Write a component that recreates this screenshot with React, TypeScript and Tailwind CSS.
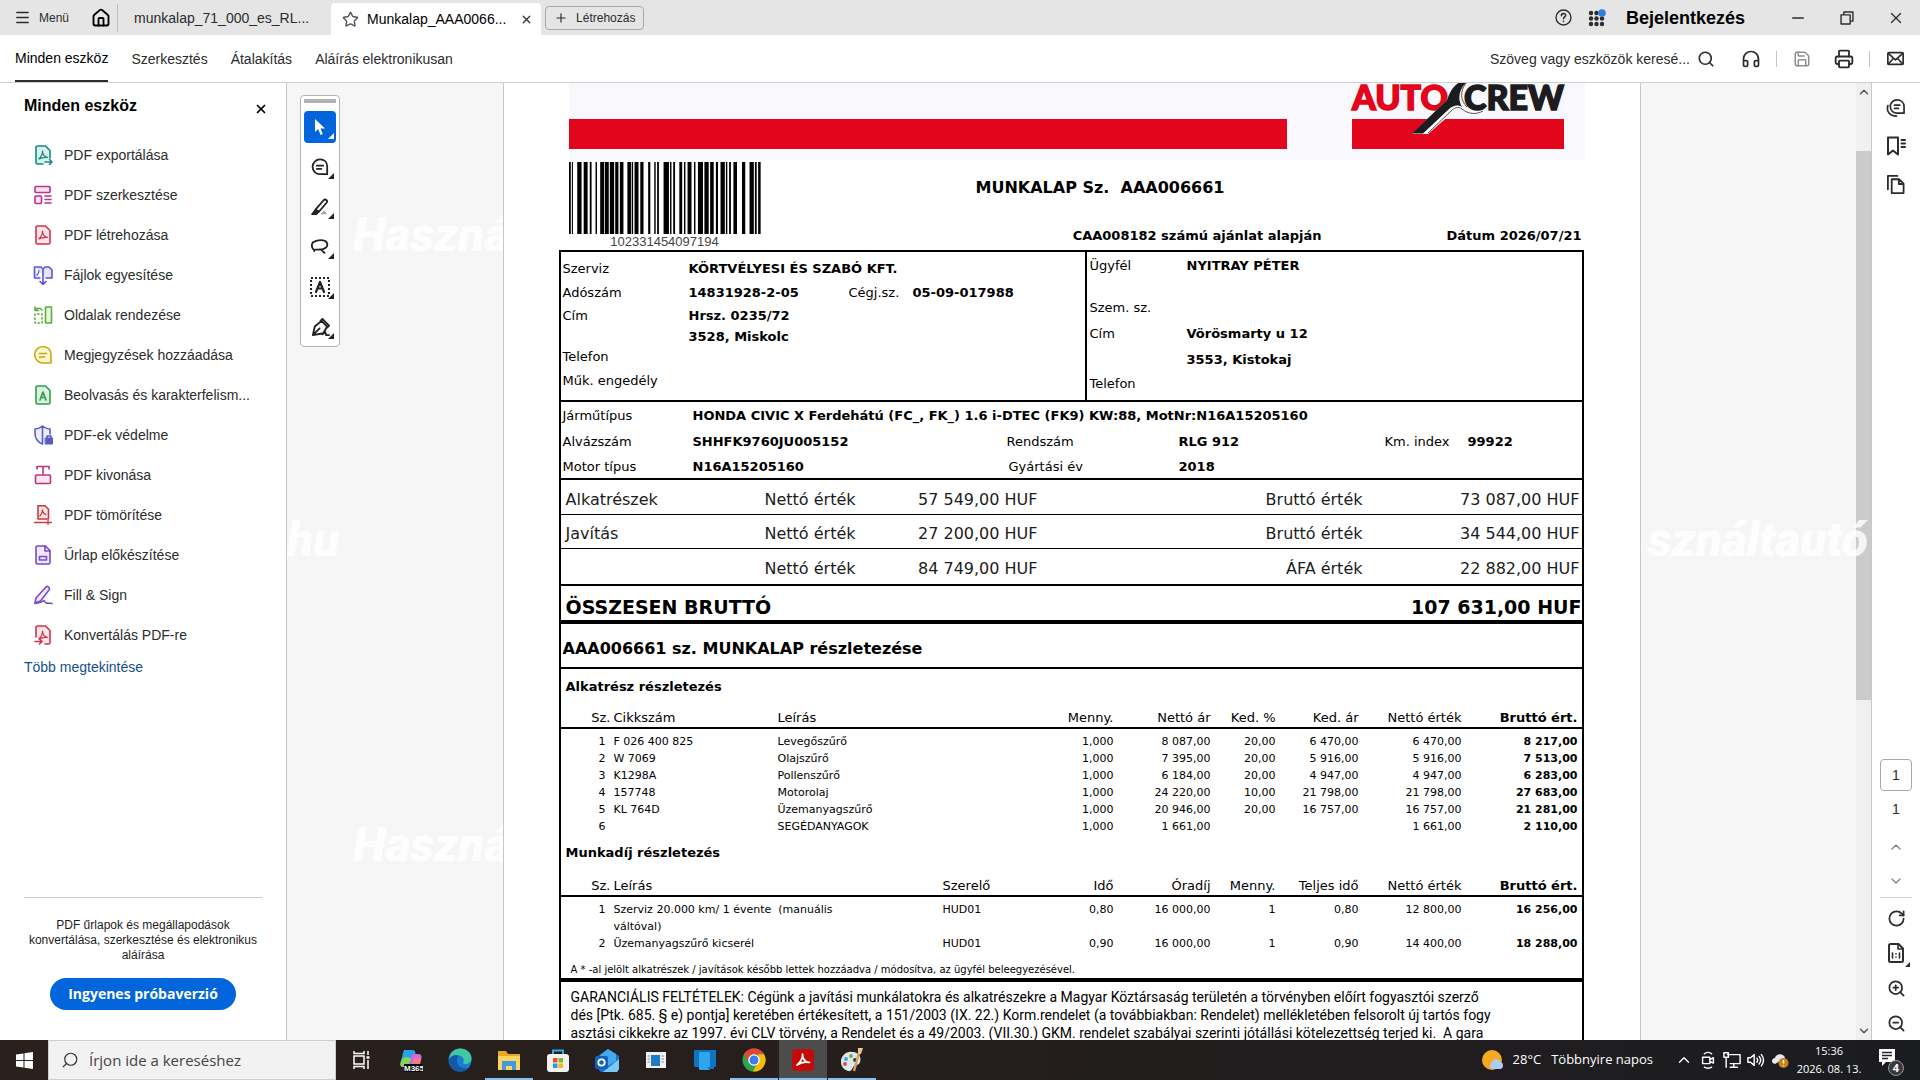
import type { ReactNode } from 'react';
import {
  ChevronDown,
  ChevronUp,
  Headphones,
  House,
  Menu,
  Minus,
  Plus,
  Printer,
  RotateCw,
  Save,
  Search,
  Star,
  X,
  ZoomIn,
  ZoomOut,
} from 'lucide-react';

const ACROBAT = 'M6 14c2-2 3.500-5 3.500-8 0 3 2 5.500 5 6.500-3-.5-6 0-8.500 1.500z';

function Svg({ children, size = 20, color = 'currentColor' }: { children: ReactNode; size?: number; color?: string }) {
  return (
    <svg width={size} height={size} viewBox="0 0 20 20" fill="none" stroke={color} strokeWidth="1.6" strokeLinejoin="round" strokeLinecap="round" aria-hidden="true" className="shrink-0">
      {children}
    </svg>
  );
}

const PAGE = 'M4.500 1h8L17 5.500V17.500a1.500 1.500 0 0 1-1.500 1.500h-11A1.500 1.500 0 0 1 3 17.500V2.500A1.500 1.500 0 0 1 4.500 1z';

const TOOLS = [
  {
    label: 'PDF exportálása',
    icon: (
      <Svg color="#138a80">
        <path d="M10 19H4.500A1.500 1.500 0 0 1 3 17.500v-15A1.500 1.500 0 0 1 4.500 1h8L17 5.500V13" fill="#d8efed" />
        <path d="M12 17h7M16.500 14.500 19 17l-2.500 2.500" />
        <path d={ACROBAT} strokeWidth="1.200" />
      </Svg>
    ),
  },
  {
    label: 'PDF szerkesztése',
    icon: (
      <Svg color="#b8328e">
        <rect x="2" y="1.500" width="15" height="6" rx="1" fill="#fbe3f3" />
        <rect x="2" y="11" width="6.500" height="7.500" rx="1" fill="#fbe3f3" />
        <path d="M12 11h6M12 14.500h6M12 18h6" />
      </Svg>
    ),
  },
  {
    label: 'PDF létrehozása',
    icon: (
      <Svg color="#d0344a">
        <path d={PAGE} fill="#fde6e8" />
        <path d={ACROBAT} strokeWidth="1.200" />
      </Svg>
    ),
  },
  {
    label: 'Fájlok egyesítése',
    icon: (
      <Svg color="#5b55d6">
        <path d="M2 2h6l2 2 2-2h4l3 3v8h-6M7 13H1.500V2M10 4v15M7 16.500l3 3 3-3" fill="#e6e5fb" />
        <path d="M4 10c1.500-1.500 2-3 2-4.500" strokeWidth="1.200" />
      </Svg>
    ),
  },
  {
    label: 'Oldalak rendezése',
    icon: (
      <Svg color="#5fae3e">
        <rect x="12.500" y="2" width="6" height="16" fill="#e5f5de" />
        <path d="M9 5C7 2.500 4 3 2.500 5M2 2v3.500h3.500" />
        <path d="M2 9v9h7V9z" strokeDasharray="1.500 2.500" />
      </Svg>
    ),
  },
  {
    label: 'Megjegyzések hozzáadása',
    icon: (
      <Svg color="#c9a90c">
        <path d="M10 1.500c5 0 8 3.500 8 8V18h-8a8.200 8.200 0 1 1 0-16.500z" fill="#fbf6d0" />
        <path d="M6.500 8.500h7M6.500 12h5" />
      </Svg>
    ),
  },
  {
    label: 'Beolvasás és karakterfelism...',
    icon: (
      <Svg color="#2f9e4c">
        <path d={PAGE} fill="#daf1df" />
        <path d="M7 15l3-8 3 8M8 12.500h4" />
      </Svg>
    ),
  },
  {
    label: 'PDF-ek védelme',
    icon: (
      <Svg color="#5b5bc4">
        <path d="M9.500 19C4 17 2 13 2 8V4c3 0 5-1 7.500-3 2.500 2 4.500 3 7.500 3v5M9.500 1v18" fill="#eeeefb" />
        <rect x="12.500" y="13" width="7" height="6" fill="#5b5bc4" strokeWidth="1" />
        <path d="M14 13v-2h4v2" />
      </Svg>
    ),
  },
  {
    label: 'PDF kivonása',
    icon: (
      <Svg color="#bb3480">
        <path d="M4 4V1.500h12V4M10 2v7" />
        <rect x="2.500" y="10" width="15" height="8.500" rx="1" fill="#fbe6f1" />
      </Svg>
    ),
  },
  {
    label: 'PDF tömörítése',
    icon: (
      <Svg color="#c8393f">
        <path d="M5 .8h7l3.500 3.500V14h-10.500z" fill="#fde6e8" />
        <path d="M7 11c2-2 2.500-4 2.500-6 0 2 1 3.500 3.500 4.500M1.500 17.500h17M15 15.500v4" strokeWidth="1.300" />
      </Svg>
    ),
  },
  {
    label: 'Űrlap előkészítése',
    icon: (
      <Svg color="#7a49cc">
        <path d={PAGE} fill="#eee6fb" />
        <path d="M12 1v5h5M6.500 11.500h7V15h-7z" />
      </Svg>
    ),
  },
  {
    label: 'Fill & Sign',
    icon: (
      <Svg color="#7a49cc">
        <path d="M2 18l1-5L13 2c1.500-1.500 4.500.5 3 3L7.500 16z" fill="#f1eafc" />
        <path d="M2 18.500c4-1 7-1 9-3 1 2 1.500 3 3 2.500l5 .5" />
      </Svg>
    ),
  },
  {
    label: 'Konvertálás PDF-re',
    icon: (
      <Svg color="#d0344a">
        <path d="M3 12V2.500A1.500 1.500 0 0 1 4.500 1h8L17 5.500V17.500a1.500 1.500 0 0 1-1.500 1.500H12" fill="#fde6e8" />
        <path d="M2 16.500h7M6.500 14 9 16.500 6.500 19" />
        <path d={ACROBAT} strokeWidth="1.200" />
      </Svg>
    ),
  },
];

const PARTS = [
  ['1', 'F 026 400 825', 'Levegőszűrő', '1,000', '8 087,00', '20,00', '6 470,00', '6 470,00', '8 217,00'],
  ['2', 'W 7069', 'Olajszűrő', '1,000', '7 395,00', '20,00', '5 916,00', '5 916,00', '7 513,00'],
  ['3', 'K1298A', 'Pollenszűrő', '1,000', '6 184,00', '20,00', '4 947,00', '4 947,00', '6 283,00'],
  ['4', '157748', 'Motorolaj', '1,000', '24 220,00', '10,00', '21 798,00', '21 798,00', '27 683,00'],
  ['5', 'KL 764D', 'Üzemanyagszűrő', '1,000', '20 946,00', '20,00', '16 757,00', '16 757,00', '21 281,00'],
  ['6', '', 'SEGÉDANYAGOK', '1,000', '1 661,00', '', '', '1 661,00', '2 110,00'],
];

const LABOUR = [
  ['1', 'Szerviz 20.000 km/ 1 évente \u00a0(manuális váltóval)', 'HUD01', '0,80', '16 000,00', '1', '0,80', '12 800,00', '16 256,00'],
  ['2', 'Üzemanyagszűrő kicserél', 'HUD01', '0,90', '16 000,00', '1', '0,90', '14 400,00', '18 288,00'],
];

// [start, width] of every bar, on a 536 wide strip
const BARS = [
  [0, 5], [8, 3], [23, 12], [41, 11], [58, 5], [74, 4], [87, 11], [100, 11], [114, 12], [129, 9], [142, 10], [163, 10],
  [175, 4], [183, 11], [199, 9], [221, 6], [238, 4], [246, 5], [264, 15], [282, 4], [291, 5], [308, 8], [321, 4],
  [331, 11], [349, 4], [360, 14], [378, 12], [394, 10], [410, 6], [423, 12], [438, 4], [447, 5], [459, 10], [483, 9],
  [504, 12], [519, 5], [528, 7],
];

function TitleBar() {
  return (
    <header className="flex h-[35px] shrink-0 items-center bg-[#e5e5e5] text-[#2c2c2c]">
      <button className="ml-[14px] flex items-center gap-2 text-xs">
        <Menu size={17} strokeWidth={2} />
        Menü
      </button>
      <button aria-label="Kezdőlap" className="ml-[22px] flex h-7 items-center gap-1.5 border-r border-[#bdbdbd] pr-1.5 text-black">
        <House size={20} strokeWidth={2.200} />
      </button>
      <button className="w-[213px] truncate pl-4 text-left text-sm">munkalap_71_000_es_RL...</button>
      <div className="mt-[3px] flex h-8 w-[210px] items-center rounded-t bg-white pl-[11px] pr-2 text-sm text-black">
        <Star size={17} strokeWidth={2} className="mr-2 shrink-0 text-[#555]" />
        <button className="flex-1 text-left">Munkalap_AAA0066...</button>
        <button aria-label="Lap bezárása" className="text-[#333]">
          <X size={13} strokeWidth={2.500} />
        </button>
      </div>
      <button className="ml-1 flex h-6 w-[99px] items-center gap-2 rounded border border-[#a8a8a8] pl-2 text-xs">
        <Plus size={14} strokeWidth={2} />
        Létrehozás
      </button>
      <div className="ml-auto flex items-center">
        <button aria-label="Súgó">
          <Svg size={17}>
            <circle cx="10" cy="10" r="8.800" />
            <path d="M7.500 8c0-3.500 5-3.500 5-.5 0 1.800-2.500 1.800-2.500 4M10 14.300v.4" strokeWidth="1.800" />
          </Svg>
        </button>
        <button aria-label="Alkalmazások" className="ml-4">
          <svg width="18" height="18" viewBox="0 0 18 18" fill="#2c2c2c">
            {[4, 9.500, 15].map((y) => [3, 8.500, 14].map((x) => <circle key={`${x}-${y}`} cx={x} cy={y} r="2.200" />))}
            <circle cx="14" cy="4" r="3.800" fill="#2f7fe0" />
          </svg>
        </button>
        <button className="ml-5 mr-7 text-lg font-bold text-black">Bejelentkezés</button>
        <button aria-label="Kis méret" className="flex w-[49px] justify-center">
          <Minus size={18} strokeWidth={2} />
        </button>
        <button aria-label="Előző méret" className="flex w-[49px] justify-center">
          <Svg size={14}>
            <path d="M1.500 5.500h13v13h-13zM5.500 5.500v-4h13v13h-4" strokeWidth="2" />
          </Svg>
        </button>
        <button aria-label="Bezárás" className="flex w-[49px] justify-center">
          <X size={18} strokeWidth={1.800} />
        </button>
      </div>
    </header>
  );
}

function MenuBar() {
  return (
    <nav className="flex h-12 shrink-0 items-center border-b border-[#d0d0d0] bg-white text-sm text-[#2c2c2c]">
      <div className="flex h-full gap-[23px] pl-[15px]">
        <button className="border-b-2 border-[#2c2c2c] text-black">Minden eszköz</button>
        <button>Szerkesztés</button>
        <button>Átalakítás</button>
        <button>Aláírás elektronikusan</button>
      </div>
      <div className="ml-auto flex items-center pr-[13px]">
        <input aria-label="Keresés" placeholder="Szöveg vagy eszközök keresé..." className="w-[204px] outline-none placeholder:text-[#2c2c2c]" />
        <button aria-label="Keresés indítása" className="flex w-6 justify-center">
          <Search size={18} strokeWidth={2.200} />
        </button>
        <button aria-label="Támogatás" className="ml-[21px] flex w-6 justify-center">
          <Headphones size={20} strokeWidth={2} />
        </button>
        <span className="mx-[13px] h-4 w-px bg-[#c4c4c4]" />
        <button aria-label="Mentés" className="flex w-6 justify-center text-[#8f8f8f]">
          <Save size={18} strokeWidth={2} />
        </button>
        <button aria-label="Nyomtatás" className="ml-[18px] flex w-6 justify-center">
          <Printer size={20} strokeWidth={2.200} />
        </button>
        <span className="mx-[13px] h-4 w-px bg-[#c4c4c4]" />
        <button aria-label="Küldés e-mailben" className="flex w-6 justify-center">
          <Svg size={17}>
            <rect x="1" y="3" width="18" height="14" rx="1.500" strokeWidth="2" />
            <path d="M1.500 4l8.500 7.500L18.500 4M1.500 16.500 7.500 10M18.500 16.500l-6-6.500" strokeWidth="2" />
          </Svg>
        </button>
      </div>
    </nav>
  );
}

function Sidebar() {
  return (
    <aside className="flex w-[287px] shrink-0 flex-col border-r border-[#c8c8c8] bg-white">
      <div className="flex h-[52px] items-center justify-between pl-6 pr-[18px]">
        <h2 className="pb-1.5 text-base font-bold text-black">Minden eszköz</h2>
        <button aria-label="Panel bezárása">
          <X size={14} strokeWidth={3} />
        </button>
      </div>
      <ul>
        {TOOLS.map((t) => (
          <li key={t.label}>
            <button className="flex h-10 w-full items-center gap-[11px] pl-[33px] text-sm text-[#2c2c2c]">
              {t.icon}
              {t.label}
            </button>
          </li>
        ))}
      </ul>
      <a href="#tools" className="ml-6 mt-0.5 self-start text-sm text-[#14508c]">
        Több megtekintése
      </a>
      <div className="mx-6 mb-[30px] mt-auto border-t border-[#c8c8c8] pt-5 text-center">
        <p className="text-xs leading-[15px] text-[#1c1c1c]">
          PDF űrlapok és megállapodások konvertálása, szerkesztése és elektronikus aláírása
        </p>
        <button className="mt-[15px] h-8 w-[186px] rounded-full bg-[#0265dc] font-['Open_Sans'] text-sm font-bold text-white">
          Ingyenes próbaverzió
        </button>
      </div>
    </aside>
  );
}

function QuickTool({ label, active, children }: { label: string; active?: boolean; children: ReactNode }) {
  return (
    <button
      aria-label={label}
      className={`relative flex h-8 w-8 items-center justify-center rounded-sm ${active ? 'bg-[#0265dc] text-white' : 'text-[#222]'}`}
    >
      {children}
      <svg width="6" height="6" viewBox="0 0 6 6" fill="currentColor" className="absolute bottom-1 right-0.5">
        <path d="M6 0v6H0z" />
      </svg>
    </button>
  );
}

function QuickTools() {
  return (
    <div className="absolute left-[13px] top-3 flex w-10 flex-col items-center gap-2 rounded border border-[#b4b4b4] bg-white pb-[3px] pt-[3px]">
      <span className="h-1 w-8 bg-[#b1b1b1]" />
      <QuickTool label="Kijelölés" active>
        <svg width="12" height="17" viewBox="0 0 12 17" fill="white">
          <path d="M1 0v13l3.200-3 2.300 6 2.300-1-2.300-5.500H11z" />
        </svg>
      </QuickTool>
      <QuickTool label="Megjegyzés">
        <Svg size={18}>
          <path d="M10 1.500c5 0 8 3.500 8 8V18h-8a8.200 8.200 0 1 1 0-16.500zM6.500 8.500h7M6.500 12h5" strokeWidth="2" />
        </Svg>
      </QuickTool>
      <QuickTool label="Kiemelés">
        <Svg size={18}>
          <path d="M10 18h8l-3-4z" fill="#aaa" stroke="none" />
          <path d="M5 13 14 2.500c2-2 5 .5 3.500 2.500L9 15z" strokeWidth="2" />
          <path d="M4.500 13.500 1 18h5l3-3z" fill="currentColor" />
        </Svg>
      </QuickTool>
      <QuickTool label="Rajzolás">
        <Svg size={18}>
          <path d="M2 5c4-3 13-4 15.500 0 2.500 5-3 8-7.500 8-4 0-7-1-6.500 1.500M2 5c-2 3-1 6 1.500 8.500M10 12.500c2 .5 3 2 5 4" strokeWidth="2" />
        </Svg>
      </QuickTool>
      <QuickTool label="Szöveg">
        <Svg size={20}>
          <path d="M1 1h18v18H1z" strokeWidth="2" strokeDasharray="2 2" strokeLinecap="butt" />
          <path d="M6 15l4-10 4 10M7.500 11.500h5" strokeWidth="2.200" />
        </Svg>
      </QuickTool>
      <QuickTool label="Aláírás">
        <Svg size={19}>
          <path d="M2 18 4 9l7-6 6 6-4 7zM2 18l7-7M10 3l2-2 7 7-2 2M12 17l3-2 1 3h3" strokeWidth="2" />
        </Svg>
      </QuickTool>
    </div>
  );
}

function Logo() {
  return (
    <svg width="216" height="68" viewBox="0 0 216 68" role="img" aria-label="Auto Crew" className="shrink-0">
      <rect x="2" y="36" width="212" height="30" fill="#e3051b" />
      <text x="2" y="27" fontFamily="Lato, sans-serif" fontWeight="900" fontSize="34" fill="#e3051b" stroke="#e3051b" strokeWidth="1.500">AUTO</text>
      <path d="M62 51 97 17C99 9 104 1 113-2h18c12 8 13 24 3 31-8 5-17 3-22-1-5-3-8 0-11 3L78 51z" fill="#f8f8fd" />
      <path d="M78 50 101 28c3-3 7-5 11-2 6 5 14 6 21 2M116 0c-6 8-6 17 1 24" fill="none" stroke="#55555a" strokeWidth="1" />
      <path d="M62 50.500 97 17C100 9 103 2 112-2h6c-9 7-11 18-6 26-5-3-9-1-13 2L73 50.500z" fill="#1c1c1e" />
      <text x="114" y="27" fontFamily="Lato, sans-serif" fontWeight="900" fontSize="34" fill="#1c1c1e" stroke="#1c1c1e" strokeWidth="1.500">CREW</text>
    </svg>
  );
}

function SheetHead() {
  return (
    <>
      <div className="ml-[10px] flex h-[77px] justify-between bg-[#f8f8fd] pr-[19px]">
        <div className="mt-9 h-[30px] w-[718px] bg-[#e3051b]" />
        <Logo />
      </div>
      <div className="ml-[10px] flex h-[90px]">
        <div className="w-[192px] pt-0.5 text-center">
          <svg width="192" height="72" viewBox="0 0 536 72" preserveAspectRatio="none" role="img" aria-label="Vonalkód">
            {BARS.map(([x, w]) => (
              <rect key={x} x={x} width={w} height="72" />
            ))}
          </svg>
          <p className="font-['Liberation_Sans'] text-[13px] leading-4 text-[#444]">102331454097194</p>
        </div>
        <div className="flex-1 pt-4 font-bold">
          <h1 className="pl-[215px] text-base leading-6">MUNKALAP Sz. &nbsp;AAA006661</h1>
          <div className="mt-6 flex justify-end gap-[125px] pr-[3px] leading-6">
            <span>CAA008182 számú ajánlat alapján</span>
            <span>Dátum 2026/07/21</span>
          </div>
        </div>
      </div>
    </>
  );
}

function Parties() {
  return (
    <section className="flex h-[150px] border-b-2 border-black">
      <dl className="grid flex-1 grid-cols-[126px_160px_64px_1fr] grid-rows-[24px_24px_21px_22px_18px_30px] items-center pl-0.5 pt-[5px]">
        <dt>Szerviz</dt>
        <dd className="col-span-3 font-bold">KÖRTVÉLYESI ÉS SZABÓ KFT.</dd>
        <dt>Adószám</dt>
        <dd className="font-bold">14831928-2-05</dd>
        <dt>Cégj.sz.</dt>
        <dd className="font-bold">05-09-017988</dd>
        <dt>Cím</dt>
        <dd className="col-span-3 font-bold">Hrsz. 0235/72</dd>
        <dd className="col-span-3 col-start-2 font-bold">3528, Miskolc</dd>
        <dt className="col-span-4">Telefon</dt>
        <dt className="col-span-4">Műk. engedély</dt>
      </dl>
      <dl className="grid w-[497px] grid-cols-[97px_1fr] grid-rows-[26px_16px_26px_26px_25px_24px] items-center border-l-2 border-black pl-[3px] pt-px">
        <dt>Ügyfél</dt>
        <dd className="font-bold">NYITRAY PÉTER</dd>
        <dt className="row-start-3">Szem. sz.</dt>
        <dt className="row-start-4">Cím</dt>
        <dd className="row-start-4 font-bold">Vörösmarty u 12</dd>
        <dd className="col-start-2 row-start-5 font-bold">3553, Kistokaj</dd>
        <dt className="row-start-6">Telefon</dt>
      </dl>
    </section>
  );
}

function Vehicle() {
  return (
    <section className="border-b-2 border-black">
      <dl className="grid h-[76px] grid-cols-[130px_314px_172px_206px_83px_1fr] grid-rows-[26px_26px_24px] items-center pl-0.5 pt-px">
        <dt>Járműtípus</dt>
        <dd className="col-span-5 font-bold">HONDA CIVIC X Ferdehátú (FC_, FK_) 1.6 i-DTEC (FK9) KW:88, MotNr:N16A15205160</dd>
        <dt>Alvázszám</dt>
        <dd className="font-bold">SHHFK9760JU005152</dd>
        <dt>Rendszám</dt>
        <dd className="font-bold">RLG 912</dd>
        <dt>Km. index</dt>
        <dd className="font-bold">99922</dd>
        <dt>Motor típus</dt>
        <dd className="font-bold">N16A15205160</dd>
        <dt className="pl-0.5">Gyártási év</dt>
        <dd className="font-bold">2018</dd>
      </dl>
    </section>
  );
}

function Totals() {
  const rows = [
    ['Alkatrészek', '57 549,00 HUF', 'Bruttó érték', '73 087,00 HUF'],
    ['Javítás', '27 200,00 HUF', 'Bruttó érték', '34 544,00 HUF'],
    ['', '84 749,00 HUF', 'ÁFA érték', '22 882,00 HUF'],
  ];
  return (
    <table className="w-full table-fixed border-b-2 border-black text-base text-[#1c1c1c]">
      <colgroup>
        <col className="w-[204px]" />
        <col className="w-[120px]" />
        <col className="w-[153px]" />
        <col className="w-[325px]" />
        <col />
      </colgroup>
      <tbody>
        {rows.map(([name, net, label, gross]) => (
          <tr key={net} className="h-[34px] border-b border-black last:h-[37px] last:border-0">
            <th className="pl-[5px] pt-1.5 text-left font-normal">{name}</th>
            <td className="pt-1.5">Nettó érték</td>
            <td className="pt-1.5 text-right">{net}</td>
            <td className="pt-1.5 text-right">{label}</td>
            <td className="pr-0.5 pt-1.5 text-right">{gross}</td>
          </tr>
        ))}
      </tbody>
    </table>
  );
}

function DetailTable({ head, rows, wide }: { head: string[]; rows: string[][]; wide?: boolean }) {
  const last = head.length - 1;
  const align = (i: number) => {
    if (i === 0) return 'text-right';
    if (i <= 2) return 'text-left';
    return i === last ? 'pr-1 text-right font-bold' : 'text-right font-normal';
  };
  return (
    <table className="w-full table-fixed">
      <colgroup>
        <col className="w-[53px]" />
        <col className={wide ? 'w-[329px]' : 'w-[164px]'} />
        <col />
        <col className="w-[97px]" />
        <col className="w-[97px]" />
        <col className="w-[65px]" />
        <col className="w-[83px]" />
        <col className="w-[103px]" />
        <col className="w-[120px]" />
      </colgroup>
      <thead>
        <tr className="h-6 border-b-2 border-black">
          {head.map((h, i) => (
            <th key={h} className={`whitespace-nowrap pt-1 ${align(i)} ${i === 0 ? 'pr-[3px]' : ''} ${i < 3 ? 'font-normal' : ''}`}>
              {h}
            </th>
          ))}
        </tr>
      </thead>
      <tbody className="text-[11px] leading-[17px] before:block before:h-1">
        {rows.map((r) => (
          <tr key={r[0]} className="align-top">
            {r.map((c, i) => (
              <td key={i} className={`${align(i)} ${i === 0 ? 'pr-2' : ''}`}>
                {i === 1 ? <div className="max-w-[240px]">{c}</div> : c}
              </td>
            ))}
          </tr>
        ))}
      </tbody>
    </table>
  );
}

function Sheet() {
  return (
    <article className="relative mx-auto w-full max-w-[1138px] overflow-hidden border-x border-[#c8c8c8] bg-white px-[55px] font-['DejaVu_Sans'] text-[13px] leading-4 text-black">
      <SheetHead />
      <div className="mr-px border-x-2 border-t-2 border-black">
        <Parties />
        <Vehicle />
        <Totals />
        <div className="flex h-[38px] items-center justify-between border-b-4 border-black pl-[5px] pt-2 text-[19px] font-bold">
          <span>ÖSSZESEN BRUTTÓ</span>
          <span>107 631,00 HUF</span>
        </div>
        <h2 className="flex h-[45px] items-center border-b-2 border-black pl-0.5 pt-1.5 text-base font-bold">
          AAA006661 sz. MUNKALAP részletezése
        </h2>
        <h3 className="pb-[9px] pl-[5px] pt-2.5 font-bold">Alkatrész részletezés</h3>
        <DetailTable
          head={['Sz.', 'Cikkszám', 'Leírás', 'Menny.', 'Nettó ár', 'Ked. %', 'Ked. ár', 'Nettó érték', 'Bruttó ért.']}
          rows={PARTS}
        />
        <h3 className="pb-[11px] pl-[5px] pt-2.5 font-bold">Munkadíj részletezés</h3>
        <DetailTable
          wide
          head={['Sz.', 'Leírás', 'Szerelő', 'Idő', 'Óradíj', 'Menny.', 'Teljes idő', 'Nettó érték', 'Bruttó ért.']}
          rows={LABOUR}
        />
        <p className="border-b-4 border-black pl-[10px] pt-2.5 text-[10px] leading-4">
          A * -al jelölt alkatrészek / javítások később lettek hozzáadva / módosítva, az ügyfél beleegyezésével.
        </p>
        <p className="whitespace-nowrap pl-[10px] pt-1.5 font-['Roboto'] text-[14px] leading-[18px]">
          GARANCIÁLIS FELTÉTELEK: Cégünk a javítási munkálatokra és alkatrészekre a Magyar Köztársaság területén a törvényben előírt fogyasztói szerző
          <br />
          dés [Ptk. 685. § e) pontja] keretében értékesített, a 151/2003 (IX. 22.) Korm.rendelet (a továbbiakban: Rendelet) mellékletében felsorolt új tartós fogy
          <br />
          asztási cikkekre az 1997. évi CLV törvény, a Rendelet és a 49/2003. (VII.30.) GKM. rendelet szabályai szerinti jótállási kötelezettség terjed ki. &nbsp;A gara
        </p>
      </div>
    </article>
  );
}

const MARK = "pointer-events-none absolute select-none whitespace-nowrap font-['Roboto'] text-[48px] leading-none font-black italic text-white/80";

function Viewer() {
  return (
    <main className="relative flex min-w-0 flex-1 overflow-hidden bg-[#f6f6f6]">
      <div className="relative min-w-0 flex-1 overflow-hidden">
        <span aria-hidden="true" className={`${MARK} left-[66px] top-[128px]`}>Haszná</span>
        <span aria-hidden="true" className={`${MARK} left-[66px] top-[738px]`}>Haszná</span>
        <span aria-hidden="true" className={`${MARK} left-0 top-[433px]`}>hu</span>
        <Sheet />
        <QuickTools />
      </div>
      <div className="flex w-[15px] shrink-0 flex-col items-center bg-[#f0f0f0] py-0.5">
        <ChevronUp size={14} strokeWidth={2.500} className="text-[#555]" />
        <div className="mt-[52px] h-[549px] w-full bg-[#cbcbcb]" />
        <ChevronDown size={14} strokeWidth={2.500} className="mt-auto text-[#555]" />
      </div>
      <span aria-hidden="true" className={`${MARK} right-[3px] top-[433px]`}>sználtautó</span>
    </main>
  );
}

function Rail() {
  return (
    <aside className="flex w-[49px] shrink-0 flex-col items-center border-l border-[#c8c8c8] bg-white text-[#2c2c2c]">
      <div className="flex flex-col gap-[19px] pt-[15px]">
        <button aria-label="Megjegyzések">
          <Svg size={19}>
            <path d="M11.500 2c4.500 0 7.500 3 7.500 7v7h-7.500a7 7 0 1 1 0-14zM9 7.500h5.500M9 11h4M2 8c-2 6 2 11 9 11" strokeWidth="1.800" />
          </Svg>
        </button>
        <button aria-label="Könyvjelzők">
          <Svg>
            <path d="M2 1.500h10V18.500l-5-4-5 4zM15.500 4H19M15.500 7.500H19M15.500 11H19" strokeWidth="2" />
          </Svg>
        </button>
        <button aria-label="Oldalak">
          <Svg size={19}>
            <path d="M6 4.500h8l4.500 4.500v10H6zM13.500 5v4.500h4.500M2 15V1h10" strokeWidth="1.900" />
          </Svg>
        </button>
      </div>
      <div className="mt-auto flex flex-col items-center pb-[7px] text-sm">
        <input aria-label="Oldalszám" defaultValue="1" className="h-8 w-8 rounded border border-[#a8a8a8] text-center" />
        <span className="mt-2 leading-5">1</span>
        <button aria-label="Előző oldal" className="mt-5 text-[#8a8a8a]">
          <ChevronUp size={16} strokeWidth={2.200} />
        </button>
        <button aria-label="Következő oldal" className="mt-[18px] text-[#8a8a8a]">
          <ChevronDown size={16} strokeWidth={2.200} />
        </button>
        <div className="mt-2 h-px w-8 bg-[#d4d4d4]" />
        <button aria-label="Forgatás" className="mt-[11px]">
          <RotateCw size={19} strokeWidth={2.200} />
        </button>
        <button aria-label="Tényleges méret" className="relative mt-[15px]">
          <Svg>
            <path d={PAGE} strokeWidth="2" />
            <path d="M12 1v5h5M6.500 10v5M13.500 10v5M10 10.800v.2M10 14v.2" strokeWidth="1.600" />
          </Svg>
          <svg width="5" height="5" viewBox="0 0 6 6" fill="currentColor" className="absolute -bottom-1 -right-1">
            <path d="M6 0v6H0z" />
          </svg>
        </button>
        <button aria-label="Nagyítás" className="mt-4">
          <ZoomIn size={19} strokeWidth={2.200} />
        </button>
        <button aria-label="Kicsinyítés" className="mt-4">
          <ZoomOut size={19} strokeWidth={2.200} />
        </button>
      </div>
    </aside>
  );
}

const APPS = [
  {
    name: 'Feladatnézet',
    state: '',
    art: (
      <g fill="none" stroke="#fff" strokeWidth="1.500">
        <path d="M4 8h10v8H4zM4 3v2.500h10V3M4 21v-2.500h10V21M18 3v4M18 12v9" />
        <path d="M16.500 9.500h3" strokeWidth="2.500" />
      </g>
    ),
  },
  {
    name: 'Microsoft 365',
    state: '',
    art: (
      <>
        <path d="M5 2h8c3 0 4 2 3 5l-3 9c-1 3-3 3-5 3H4c-3 0-3-3-2-6l2-8z" fill="#2aa3e8" />
        <path d="M4 10c3-1 6-1 8 1l-3 8H4c-3 0-3-3-2-6z" fill="#8fd14f" />
        <path d="M13 6h6c4 0 4 3 3 6l-1 4c-1 3-3 4-5 4h-5z" fill="#d864e0" />
        <path d="M15 10h7l-1 6c-1 3-3 4-5 4h-4z" fill="#f27a8a" />
        <rect x="5" y="16" width="18" height="8" fill="#000" />
        <text x="5" y="23" fontFamily="Liberation Sans" fontSize="8" fontWeight="700" fill="#fff">M365</text>
      </>
    ),
  },
  {
    name: 'Edge',
    state: '',
    art: (
      <>
        <circle cx="12" cy="12" r="11.500" fill="#1a7fd4" />
        <path d="M1 11C2 4 7 .5 12 .5 19 .5 23.500 5 23.500 10c0 4-3 6-6 6-2 0-3-1-2-2.500C17 10 13 7 9 7c-4 0-7 2-8 4z" fill="#3fc8a4" />
        <path d="M9 12c0 6 4 9 11 8-5 6-17 4-19-6 0-6 6-8 10-6-1 1-2 2-2 4z" fill="#1259a8" />
      </>
    ),
  },
  {
    name: 'Fájlkezelő',
    state: 'open',
    art: (
      <>
        <path d="M1 3h8l2 3h12v16H1z" fill="#e8a826" />
        <path d="M1 8h22v14H1z" fill="#fcd462" />
        <path d="M5 13h14v9h-4v-4H9v4H5z" fill="#3f9ae0" />
      </>
    ),
  },
  {
    name: 'Store',
    state: '',
    art: (
      <>
        <path d="M7 7V2.500h10V7" fill="none" stroke="#39a9e8" strokeWidth="2" />
        <rect x="1" y="6" width="22" height="18" rx="3" fill="#f2f2f2" />
        <path d="M7 10h4.500v4.500H7z" fill="#e8532b" />
        <path d="M12.500 10H17v4.500h-4.500z" fill="#7db928" />
        <path d="M7 15.500h4.500V20H7z" fill="#2a9fe0" />
        <path d="M12.500 15.500H17V20h-4.500z" fill="#f5b813" />
      </>
    ),
  },
  {
    name: 'Outlook',
    state: '',
    art: (
      <>
        <path d="M3 8 13 1l11 7v13l-2 3H6l-3-3z" fill="#1673cf" />
        <path d="M5 7 13 1l8 5v7l-8 5z" fill="#46a8ee" />
        <path d="M8 24 24 11v10l-2 3z" fill="#7cc8f5" />
        <rect x="0" y="8" width="13" height="13" rx="2" fill="#0f62b8" />
        <circle cx="6.500" cy="14.500" r="3.200" fill="none" stroke="#fff" strokeWidth="1.800" />
      </>
    ),
  },
  {
    name: 'Hírek',
    state: '',
    art: (
      <>
        <rect x="2" y="4" width="20" height="16" fill="#f2f2f2" />
        <rect x="7" y="7" width="9" height="11" fill="#1f7ac8" />
        <path d="M3.500 8H6M3.500 11H6M3.500 14H6M17.500 8H20M17.500 11H20M17.500 14H20" stroke="#888" strokeWidth="1" />
      </>
    ),
  },
  {
    name: 'Telefon',
    state: '',
    art: (
      <>
        <rect x="1" y="2" width="22" height="17" rx="1" fill="#0e75c2" />
        <rect x="6" y="4" width="11" height="18" rx="1" fill="#2ea5ee" />
        <path d="M15 20h6" stroke="#0e75c2" strokeWidth="2" />
      </>
    ),
  },
  {
    name: 'Chrome',
    state: 'open',
    art: (
      <>
        <circle cx="12" cy="12" r="11.500" fill="#2da44e" />
        <path d="M2 6.300A11.500 11.500 0 0 1 22 6.300H12z" fill="#ea4335" />
        <path d="M2 6.300 7.500 15 12 6.300z" fill="#ea4335" />
        <path d="M22 6.300A11.500 11.500 0 0 1 11 23.500L17 12l-1-5.700z" fill="#fbbc05" />
        <circle cx="12" cy="12" r="5.800" fill="#fff" />
        <circle cx="12" cy="12" r="4.500" fill="#3b7ded" />
      </>
    ),
  },
  {
    name: 'Acrobat',
    state: 'active',
    art: (
      <>
        <rect x="1" y="1" width="22" height="22" rx="4" fill="#c30b0b" />
        <path d="M6 17c3-2 6-7 5.500-11 0 5 3 8 7 8.500-4-1-9 0-12.500 2.500z" fill="none" stroke="#fff" strokeWidth="1.700" strokeLinejoin="round" />
      </>
    ),
  },
  {
    name: 'Paint',
    state: 'open',
    art: (
      <>
        <path d="M9 4c8-1 13 4 11 10-1 4-4 2-6 4s-2 6-6 5C-2 20-1 6 9 4z" fill="#dfe6ea" />
        <circle cx="6" cy="11" r="1.900" fill="#36a3d9" />
        <circle cx="11" cy="8" r="1.900" fill="#5bb548" />
        <circle cx="5" cy="16" r="1.900" fill="#e0463c" />
        <circle cx="15" cy="12" r="1.900" fill="#333" />
        <path d="M20 1 14 23" stroke="#d8a15c" strokeWidth="2.500" />
        <path d="M18 0h5l-2 6h-3z" fill="#e9c48d" />
      </>
    ),
  },
];

function Taskbar() {
  return (
    <footer className="flex h-10 shrink-0 items-center bg-linear-to-r from-[#2b211c] via-[#241e1d] to-[#1b1c20] font-['Open_Sans'] text-white">
      <button aria-label="Start" className="flex w-12 shrink-0 justify-center">
        <svg width="17" height="17" viewBox="0 0 17 17" fill="white">
          <path d="M0 2.500 7.500 1.400V8H0zM8.500 1.300 17 0v8H8.500zM0 9h7.500v6.600L0 14.500zM8.500 9H17v8l-8.500-1.300z" />
        </svg>
      </button>
      <label className="flex h-full w-72 shrink-0 items-center gap-2.5 border border-[#cfcfcf] bg-[#f2f2f2] pl-3 text-[#333]">
        <Search size={18} strokeWidth={1.600} className="-scale-x-100" />
        <input aria-label="Keresés a gépen" placeholder="Írjon ide a kereséshez" className="w-56 bg-transparent text-[15px] outline-none placeholder:text-[#444]" />
      </label>
      <div className="ml-0.5 flex h-full gap-px">
        {APPS.map((a) => (
          <button
            key={a.name}
            aria-label={a.name}
            className={`flex w-12 items-center justify-center border-b-2 pt-0.5 ${
              a.state === 'active' ? 'border-[#8ebfe8] bg-[#4d4b4b]' : a.state === 'open' ? 'border-[#8ebfe8]' : 'border-transparent'
            }`}
          >
            <svg width="24" height="24" viewBox="0 0 24 24">
              {a.art}
            </svg>
          </button>
        ))}
      </div>
      <div className="ml-auto flex items-center text-[13px]">
        <button className="flex items-center">
          <svg width="24" height="24" viewBox="0 0 24 24" className="mr-2">
            <circle cx="11" cy="12" r="10" fill="#f6a823" />
            <path d="M11 21a4 4 0 0 1 0-7c1-4 7-4 8 0 4 0 4 7 0 7z" fill="#a9cdf5" />
          </svg>
          28°C
          <span className="ml-2.5">Többnyire napos</span>
        </button>
        <button aria-label="Rejtett ikonok" className="ml-[22px]">
          <ChevronUp size={18} strokeWidth={1.800} />
        </button>
        <button aria-label="Értekezlet" className="ml-1.5">
          <Svg size={18}>
            <path d="M4 7h8v7H4zM12 9.500l4-2v6l-4-2M6 3c2-2 6-2 8 0M6 18c2 1.500 6 1.500 8 0" />
          </Svg>
        </button>
        <button aria-label="Hálózat" className="ml-1.5">
          <Svg size={18}>
            <path d="M5 4h14v10H8M12 14v4M8 18h8M1 2h5v5H1zM3.500 7v11" />
          </Svg>
        </button>
        <button aria-label="Hangerő" className="ml-1.5">
          <Svg size={18}>
            <path d="M1 7.500h3L8 4v12l-4-3.500H1zM11 8c1 1.500 1 3 0 4.500M13.500 6c2 2.500 2 6 0 8.500M16 4c3 4 3 8.500 0 12.500" />
          </Svg>
        </button>
        <button aria-label="OneDrive" className="ml-1.5">
          <svg width="18" height="18" viewBox="0 0 18 18">
            <path d="M4 13C-1 12 1 7 4 7c1-5 9-5 10 0z" fill="#e8e8e8" />
            <circle cx="12.500" cy="12" r="5" fill="#c98222" />
            <path d="M12.500 9v3.500M12.500 14v.8" stroke="#fff" strokeWidth="1.500" />
          </svg>
        </button>
        <time className="w-[80px] text-center text-[11px] leading-[18px]">
          15:36
          <br />
          2026. 08. 13.
        </time>
        <button aria-label="Értesítések" className="relative ml-[9px] mr-[18px] h-6 w-6">
          <svg width="24" height="24" viewBox="0 0 24 24">
            <path d="M1 1h16v13H8l-4 4v-4H1z" fill="#fff" />
            <path d="M4 4.500h10M4 7.500h10M4 10.500h6" stroke="#222" strokeWidth="1.300" />
          </svg>
          <span className="absolute -bottom-1 -right-0.5 flex size-4 items-center justify-center rounded-full border border-[#999] bg-[#3a3a3c] text-[11px] font-bold">4</span>
        </button>
      </div>
    </footer>
  );
}

export default function App() {
  return (
    <div className="flex h-screen flex-col overflow-hidden bg-white font-['Liberation_Sans',sans-serif]">
      <TitleBar />
      <MenuBar />
      <div className="flex min-h-0 flex-1">
        <Sidebar />
        <Viewer />
        <Rail />
      </div>
      <Taskbar />
    </div>
  );
}
